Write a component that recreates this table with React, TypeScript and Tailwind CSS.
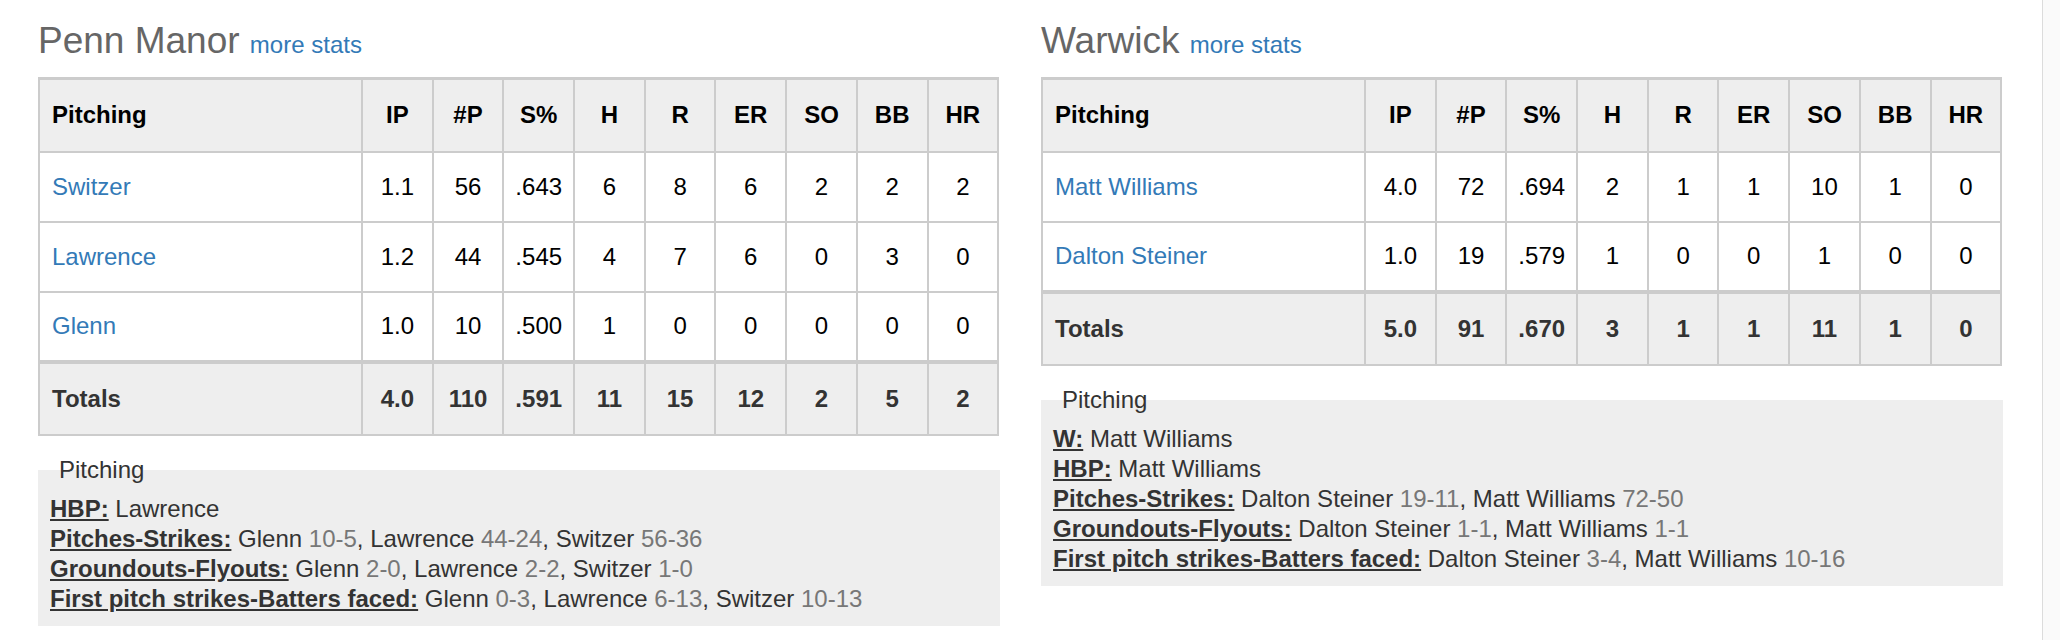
const font = '[font-family:"Liberation_Sans",Arial,Helvetica,sans-serif]'

const cols = ['IP', '#P', 'S%', 'H', 'R', 'ER', 'SO', 'BB', 'HR']

type Note = { label: string; items: [string, string?][] }

const teams = [
  {
    name: 'Penn Manor',
    pitchers: [
      { name: 'Switzer', stats: ['1.1', '56', '.643', '6', '8', '6', '2', '2', '2'] },
      { name: 'Lawrence', stats: ['1.2', '44', '.545', '4', '7', '6', '0', '3', '0'] },
      { name: 'Glenn', stats: ['1.0', '10', '.500', '1', '0', '0', '0', '0', '0'] },
    ],
    totals: ['4.0', '110', '.591', '11', '15', '12', '2', '5', '2'],
    notes: [
      { label: 'HBP:', items: [['Lawrence']] },
      { label: 'Pitches-Strikes:', items: [['Glenn', '10-5'], ['Lawrence', '44-24'], ['Switzer', '56-36']] },
      { label: 'Groundouts-Flyouts:', items: [['Glenn', '2-0'], ['Lawrence', '2-2'], ['Switzer', '1-0']] },
      { label: 'First pitch strikes-Batters faced:', items: [['Glenn', '0-3'], ['Lawrence', '6-13'], ['Switzer', '10-13']] },
    ] as Note[],
  },
  {
    name: 'Warwick',
    pitchers: [
      { name: 'Matt Williams', stats: ['4.0', '72', '.694', '2', '1', '1', '10', '1', '0'] },
      { name: 'Dalton Steiner', stats: ['1.0', '19', '.579', '1', '0', '0', '1', '0', '0'] },
    ],
    totals: ['5.0', '91', '.670', '3', '1', '1', '11', '1', '0'],
    notes: [
      { label: 'W:', items: [['Matt Williams']] },
      { label: 'HBP:', items: [['Matt Williams']] },
      { label: 'Pitches-Strikes:', items: [['Dalton Steiner', '19-11'], ['Matt Williams', '72-50']] },
      { label: 'Groundouts-Flyouts:', items: [['Dalton Steiner', '1-1'], ['Matt Williams', '1-1']] },
      { label: 'First pitch strikes-Batters faced:', items: [['Dalton Steiner', '3-4'], ['Matt Williams', '10-16']] },
    ] as Note[],
  },
]

function TeamBox({ team }: { team: (typeof teams)[number] }) {
  return (
    <div className="w-[962px] shrink-0">
      {/* Title */}
      <h2 className="h-[44px] leading-[44px] mt-[19px] mb-[14px] text-[37px] text-[#666] whitespace-nowrap">
        {team.name}{' '}
        <a href="#" className="text-[24px] text-[#337ab7]">more stats</a>
      </h2>

      {/* Stat table */}
      <table className="w-[961px] table-fixed border-collapse text-[24px]">
        <colgroup>
          <col className="w-[323px]" />
          {cols.map((c) => (
            <col key={c} className="w-[70.7px]" />
          ))}
        </colgroup>
        <thead>
          <tr className="bg-[#eee] h-[73px]">
            <th className="border-2 border-t-[3px] border-[#ccc] px-3 text-left font-bold text-black">Pitching</th>
            {cols.map((c) => (
              <th key={c} className="border-2 border-t-[3px] border-[#ccc] text-center font-bold text-black">
                {c}
              </th>
            ))}
          </tr>
        </thead>
        <tbody>
          {team.pitchers.map((p) => (
            <tr key={p.name} className="h-[70px]">
              <td className="border-2 border-[#ccc] px-3">
                <a href="#" className="text-[#337ab7]">{p.name}</a>
              </td>
              {p.stats.map((s, i) => (
                <td key={i} className="border-2 border-[#ccc] text-center text-black">
                  {s}
                </td>
              ))}
            </tr>
          ))}
          <tr className="bg-[#eee] h-[73px] font-bold text-[#333]">
            <td className="border-2 border-t-4 border-[#ccc] px-3">Totals</td>
            {team.totals.map((s, i) => (
              <td key={i} className="border-2 border-t-4 border-[#ccc] text-center">
                {s}
              </td>
            ))}
          </tr>
        </tbody>
      </table>

      {/* Notes */}
      <fieldset className="mt-[19px] bg-[#eee] px-3 pb-3 text-[24px] leading-[30px] text-[#333]">
        <legend className="px-[9px] text-[#333]">Pitching</legend>
        <div className="pt-[9px]">
          {team.notes.map((n) => (
            <div key={n.label} className="whitespace-nowrap">
              <span className="font-bold underline">{n.label}</span>{' '}
              {n.items.map(([who, val], i) => (
                <span key={who}>
                  {who}
                  {val && <span className="text-[#777]"> {val}</span>}
                  {i < n.items.length - 1 && ', '}
                </span>
              ))}
            </div>
          ))}
        </div>
      </fieldset>
    </div>
  )
}

export default function App() {
  return (
    <div className={`flex h-[640px] w-[2060px] bg-[#fafafa] ${font}`}>
      <div className="flex w-[2043px] shrink-0 gap-[41px] border-r border-[#dcdcdc] bg-white pl-[38px]">
        {teams.map((t) => (
          <TeamBox key={t.name} team={t} />
        ))}
      </div>
    </div>
  )
}
